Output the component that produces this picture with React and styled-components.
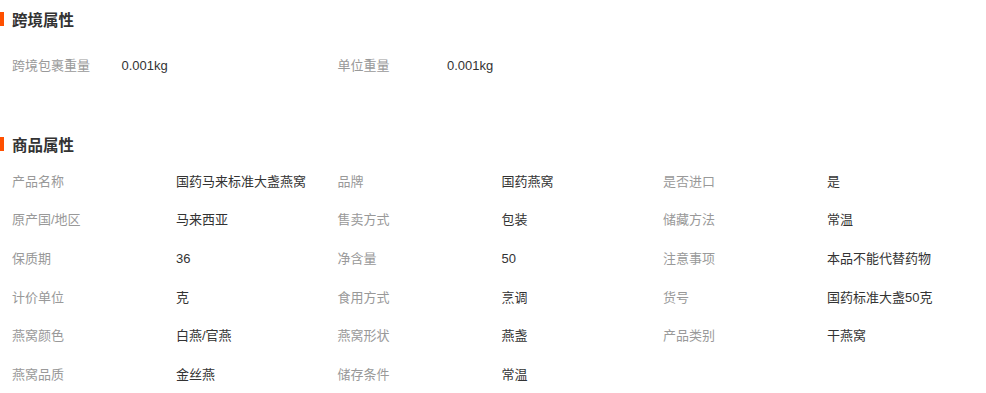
import styled, { createGlobalStyle } from "styled-components";

const GlobalStyle = createGlobalStyle`
  body {
    margin: 0;
    background: #ffffff;
    font-family: "Liberation Sans", "Noto Sans CJK SC", sans-serif;
  }
`;

const Page = styled.div`
  width: 986px;
  height: 393px;
  overflow: hidden;
`;

const Section = styled.section`
  padding-top: ${(props) => props.top}px;
`;

const Heading = styled.h3`
  margin: 0;
  height: 14px;
  line-height: 14px;
  border-left: 4px solid #ff5000;
  padding-left: 8px;
  font-size: 15.5px;
  font-weight: bold;
  color: #333333;
  font-family: "Noto Sans CJK SC", sans-serif;
`;

const Grid = styled.div`
  display: grid;
  grid-template-columns: ${(props) => props.cols};
  grid-auto-rows: 38.7px;
  padding-left: 12px;
  margin-top: ${(props) => props.gap}px;
`;

const Label = styled.div`
  line-height: 38.7px;
  font-size: 13px;
  color: #999999;
  white-space: nowrap;
`;

const Value = styled.div`
  line-height: 38.7px;
  font-size: 13px;
  color: #333333;
  white-space: nowrap;
`;

const crossBorder = [
  ["跨境包裹重量", "0.001kg"],
  ["单位重量", "0.001kg"],
];

const product = [
  ["产品名称", "国药马来标准大盏燕窝"],
  ["品牌", "国药燕窝"],
  ["是否进口", "是"],
  ["原产国/地区", "马来西亚"],
  ["售卖方式", "包装"],
  ["储藏方法", "常温"],
  ["保质期", "36"],
  ["净含量", "50"],
  ["注意事项", "本品不能代替药物"],
  ["计价单位", "克"],
  ["食用方式", "烹调"],
  ["货号", "国药标准大盏50克"],
  ["燕窝颜色", "白燕/官燕"],
  ["燕窝形状", "燕盏"],
  ["产品类别", "干燕窝"],
  ["燕窝品质", "金丝燕"],
  ["储存条件", "常温"],
];

const Pairs = ({ items }) =>
  items.map(([k, v]) => [
    <Label key={k + "-k"}>{k}</Label>,
    <Value key={k + "-v"}>{v}</Value>,
  ]);

export default function App() {
  return (
    <Page>
      <GlobalStyle />
      <Section top={12}>
        <Heading>跨境属性</Heading>
        <Grid cols="repeat(3, 109.5px 216px)" gap={21}>
          <Pairs items={crossBorder} />
        </Grid>
      </Section>
      <Section top={51}>
        <Heading>商品属性</Heading>
        <Grid cols="repeat(3, 164px 161.5px)" gap={12}>
          <Pairs items={product} />
        </Grid>
      </Section>
    </Page>
  );
}
